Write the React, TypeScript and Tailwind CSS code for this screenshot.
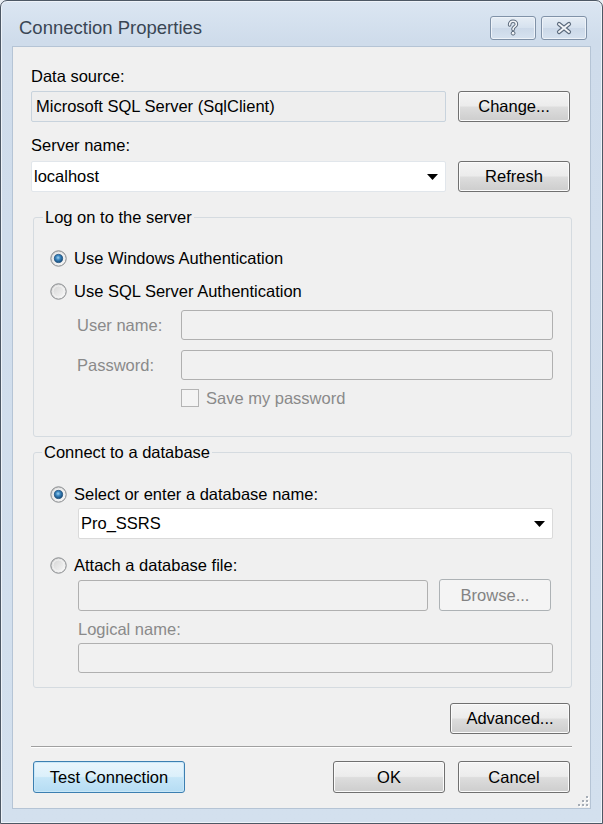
import React from "react";

const font = { fontFamily: '"Liberation Sans", Arial, sans-serif' };

function Radio({ checked, id }: { checked?: boolean; id: string }) {
  return (
    <svg width="17" height="17" viewBox="0 0 17 17" className="shrink-0">
      <defs>
        <linearGradient id={`rg-${id}`} x1="0" y1="0" x2="1" y2="1">
          <stop offset="0" stopColor="#d0d0d0" />
          <stop offset="1" stopColor="#fbfbfb" />
        </linearGradient>
        <radialGradient id={`rd-${id}`} cx="0.45" cy="0.4" r="0.6">
          <stop offset="0" stopColor="#9fd3f2" />
          <stop offset="0.45" stopColor="#3b86c0" />
          <stop offset="1" stopColor="#164a78" />
        </radialGradient>
      </defs>
      <circle cx="8.5" cy="8.5" r="7.7" fill={`url(#rg-${id})`} stroke="#85888b" strokeWidth="1" />
      <circle cx="8.5" cy="8.5" r="5.6" fill="none" stroke="#f6f6f6" strokeWidth="1" />
      {checked && <circle cx="8.5" cy="8.5" r="4.1" fill={`url(#rd-${id})`} stroke="#1c4f7e" strokeWidth="0.8" />}
    </svg>
  );
}

function Arrow() {
  return (
    <svg width="11" height="6" viewBox="0 0 11 6" className="shrink-0">
      <path d="M0 0 H11 L5.5 6 Z" fill="#000" />
    </svg>
  );
}

const btn =
  "h-[31px] flex items-center justify-center rounded-[3px] border border-[#707070] bg-[linear-gradient(to_bottom,#f4f4f4,#ececec_48%,#dddddd_52%,#cdcdcd)] shadow-[inset_0_0_0_1px_#fbfbfb] text-[16.5px] text-black";

const disabledInput = "h-[30px] rounded-[3px] border border-[#b0b0b0] bg-[#f1f1f1]";

export default function App() {
  return (
    <div className="w-[603px] h-[824px] bg-[#e9eef3]" style={font}>
      <div className="w-[603px] h-[824px] flex flex-col rounded-t-[7px] border border-[#4d5865] bg-[linear-gradient(to_bottom,#dbe6f2,#cfdceb_40px,#d3e0ee)] shadow-[inset_0_0_0_1px_#eef3f9]">
        {/* Title bar */}
        <div className="h-[45px] shrink-0 flex items-center pt-[9px] pl-[18px] pr-[15px]">
          <div className="text-[18.5px] text-[#3a4654] leading-[22px]">Connection Properties</div>
          <div className="ml-auto flex gap-[5px]">
            <div className="w-[46px] h-[24px] rounded-[3px] border border-[#8092a8] bg-[linear-gradient(to_bottom,#e6edf5,#d5e1ee_50%,#cbd8e8_50%,#d6e2ef)] shadow-[inset_0_0_0_1px_#eef3f9] flex items-center justify-center">
              <svg width="14" height="18" viewBox="0 0 14 18">
                <path d="M3.6 6 C3.6 3.4 5 2.3 7 2.3 C9 2.3 10.4 3.5 10.4 5.2 C10.4 7.4 7.6 7.6 7.1 9.6 L7.1 10.6" fill="none" stroke="#5b6a7c" strokeWidth="3.6" strokeLinecap="round" />
                <path d="M3.6 6 C3.6 3.4 5 2.3 7 2.3 C9 2.3 10.4 3.5 10.4 5.2 C10.4 7.4 7.6 7.6 7.1 9.6 L7.1 10.6" fill="none" stroke="#f3f5f8" strokeWidth="1.6" strokeLinecap="round" />
                <circle cx="7.1" cy="14.2" r="1.9" fill="#f3f5f8" stroke="#5b6a7c" strokeWidth="1" />
              </svg>
            </div>
            <div className="w-[46px] h-[24px] rounded-[3px] border border-[#8092a8] bg-[linear-gradient(to_bottom,#e6edf5,#d5e1ee_50%,#cbd8e8_50%,#d6e2ef)] shadow-[inset_0_0_0_1px_#eef3f9] flex items-center justify-center">
              <svg width="18" height="14" viewBox="0 0 18 14">
                <path d="M4 3 L14 11 M14 3 L4 11" fill="none" stroke="#5b6a7c" strokeWidth="4.2" strokeLinecap="round" />
                <path d="M4 3 L14 11 M14 3 L4 11" fill="none" stroke="#f3f5f8" strokeWidth="2" strokeLinecap="round" />
              </svg>
            </div>
          </div>
        </div>

        {/* Client area */}
        <div className="relative flex-1 ml-[11px] mr-[11px] mb-[14px] flex flex-col bg-[#f0f0f0] border border-[#b5c4d5] pl-[18px] pr-[20px] pt-[19px] text-[16.5px] text-black">
          <div className="h-[20px] leading-[20px]">Data source:</div>
          <div className="mt-[5px] flex gap-[12px]">
            <div className="flex-1 h-[31px] flex items-center pl-[4px] border border-[#c8d3dd] bg-[#eeeeee] rounded-[2px]">
              Microsoft SQL Server (SqlClient)
            </div>
            <div className={`${btn} w-[112px]`}>Change...</div>
          </div>

          <div className="mt-[13px] h-[20px] leading-[20px]">Server name:</div>
          <div className="mt-[6px] flex gap-[12px]">
            <div className="flex-1 h-[31px] flex items-center pl-[2px] pr-[7px] border border-[#e1e6eb] bg-white rounded-[2px]">
              <span className="flex-1">localhost</span>
              <Arrow />
            </div>
            <div className={`${btn} w-[112px]`}>Refresh</div>
          </div>

          {/* Log on group */}
          <fieldset className="mt-[15px] ml-[2px] mr-[-2px] border border-[#d5dbe0] rounded-[3px] pl-[16px] pr-[18px] pt-[20px] pb-[27px]">
            <legend className="ml-[-7px] px-[2px] h-[20px] leading-[20px]">Log on to the server</legend>
            <div className="h-[22px] flex items-center gap-[7px]">
              <Radio checked id="r1" />
              <span>Use Windows Authentication</span>
            </div>
            <div className="mt-[11px] h-[22px] flex items-center gap-[7px]">
              <Radio id="r2" />
              <span>Use SQL Server Authentication</span>
            </div>
            <div className="mt-[8px] flex items-center pl-[27px]">
              <span className="w-[104px] text-[#8a8a8a]">User name:</span>
              <div className={`${disabledInput} flex-1`} />
            </div>
            <div className="mt-[10px] flex items-center pl-[27px]">
              <span className="w-[104px] text-[#8a8a8a]">Password:</span>
              <div className={`${disabledInput} flex-1`} />
            </div>
            <div className="mt-[7px] h-[22px] flex items-center gap-[7px] pl-[131px]">
              <div className="w-[18px] h-[18px] border border-[#b4b4b4] bg-[#f4f4f4]" />
              <span className="text-[#8a8a8a]">Save my password</span>
            </div>
          </fieldset>

          {/* Connect group */}
          <fieldset className="mt-[5px] ml-[2px] mr-[-2px] border border-[#d5dbe0] rounded-[3px] pl-[16px] pr-[18px] pt-[21px] pb-[14px]">
            <legend className="ml-[-8px] px-[2px] h-[20px] leading-[20px]">Connect to a database</legend>
            <div className="h-[22px] flex items-center gap-[7px]">
              <Radio checked id="r3" />
              <span>Select or enter a database name:</span>
            </div>
            <div className="mt-[3px] ml-[28px] h-[31px] flex items-center pl-[2px] pr-[7px] border border-[#dadada] bg-white rounded-[2px]">
              <span className="flex-1">Pro_SSRS</span>
              <Arrow />
            </div>
            <div className="mt-[15px] h-[22px] flex items-center gap-[7px]">
              <Radio id="r4" />
              <span>Attach a database file:</span>
            </div>
            <div className="mt-[3px] ml-[28px] pr-[2px] flex items-center gap-[11px]">
              <div className={`${disabledInput} h-[31px] flex-1`} />
              <div className="w-[112px] h-[32px] flex items-center justify-center rounded-[3px] border border-[#adb2b5] bg-[#f4f4f4] text-[#838383]">
                Browse...
              </div>
            </div>
            <div className="mt-[8px] ml-[28px] h-[20px] leading-[20px] text-[#8a8a8a]">Logical name:</div>
            <div className={`mt-[4px] ml-[28px] ${disabledInput}`} />
          </fieldset>

          <div className="mt-[15px] flex justify-end">
            <div className={`${btn} w-[120px]`}>Advanced...</div>
          </div>

          <div className="mt-[12px] mr-[-2px] h-[2px] border-t border-[#a0a0a0] border-b border-b-white" />

          <div className="mt-[13px] flex items-center">
            <div className="ml-[2px] w-[152px] h-[32px] flex items-center justify-center rounded-[3px] border border-[#3c7fb1] bg-[linear-gradient(to_bottom,#e9f5fc,#dcf0fb_48%,#c6e6f8_52%,#b5dcf3)] shadow-[inset_0_0_0_1px_#c9e7f8]">
              Test Connection
            </div>
            <div className={`${btn} ml-auto w-[112px] h-[32px]`}>OK</div>
            <div className={`${btn} ml-[13px] w-[112px] h-[32px]`}>Cancel</div>
          </div>

          {/* resize grip */}
          <svg className="absolute right-[1px] bottom-[1px]" width="12" height="12" viewBox="0 0 12 12">
            {[
              [9, 1],
              [9, 5],
              [5, 5],
              [9, 9],
              [5, 9],
              [1, 9],
            ].map(([x, y], i) => (
              <g key={i}>
                <rect x={x + 1} y={y + 1} width="2" height="2" fill="#ffffff" />
                <rect x={x} y={y} width="2" height="2" fill="#a5acb5" />
              </g>
            ))}
          </svg>
        </div>
      </div>
    </div>
  );
}
